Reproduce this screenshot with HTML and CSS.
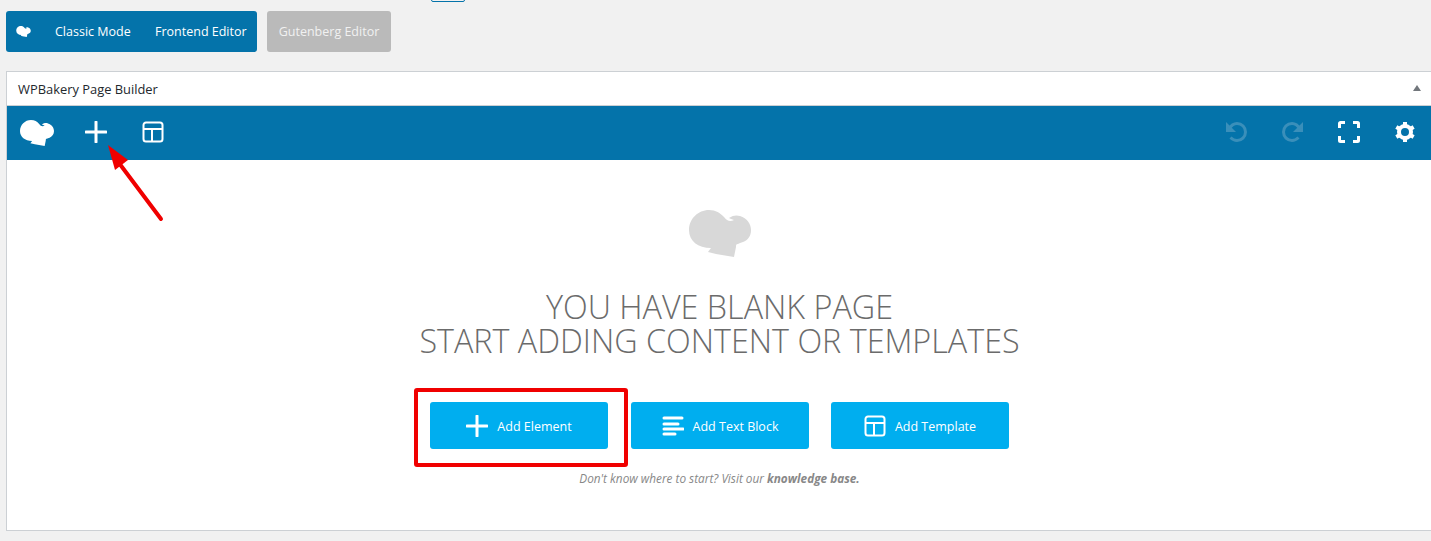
FILE: index.html
```html
<!DOCTYPE html>
<html lang="en">
<head>
  <meta charset="UTF-8">
  <title>WPBakery Page Builder</title>
  <link rel="stylesheet" href="styles.css">
</head>
<body>
  <svg class="defs" width="0" height="0">
    <symbol id="hat" viewBox="0 0 62 47">
      <path d="M20 0C27 0 31 3 35 7C38 11 41 12 45 10C43 9 41 9 40 8C44 5 48 5 51 6C58 8 62 14 62 20C62 26 59 30 54 32C52 33 50 33 49 34C47 34 47 35 47 37L45 47L27 44L19 42L22 38C9 38 0 31 0 20C0 9 9 0 20 0Z"/>
    </symbol>
    <symbol id="layout" viewBox="0 0 22 22">
      <path d="M4 1.500H18A2.500 2.500 0 0 1 20.500 4V18A2.500 2.500 0 0 1 18 20.500H4A2.500 2.500 0 0 1 1.500 18V4A2.500 2.500 0 0 1 4 1.500ZM1.500 8H20.500M10 8V20.500" fill="none" stroke="currentColor" stroke-width="2"/>
    </symbol>
    <symbol id="plus" viewBox="0 0 22 22">
      <path d="M11 1V21M1 11H21" fill="none" stroke="currentColor" stroke-width="3" stroke-linecap="round"/>
    </symbol>
  </svg>

  <div class="top-tab"></div>

  <div class="mode-row">
    <div class="mode-group">
      <svg class="mode-logo"><use href="#hat"/></svg>
      <span class="mode-link classic">Classic Mode</span>
      <span class="mode-link">Frontend Editor</span>
    </div>
    <div class="mode-gutenberg">Gutenberg Editor</div>
  </div>

  <div class="panel">
    <div class="panel-head">
      <span>WPBakery Page Builder</span>
      <span class="collapse"></span>
    </div>

    <div class="toolbar">
      <svg class="tool-logo"><use href="#hat"/></svg>
      <svg class="tool-plus"><use href="#plus"/></svg>
      <svg class="tool-layout"><use href="#layout"/></svg>
      <div class="toolbar-right">
        <svg class="tool-icon dim undo" viewBox="0 0 22 22"><path d="M1 1V11H11Z" fill="currentColor"/><path d="M4 8C6 4.500 8.500 2.500 12 2.500C17 2.500 20.500 6.500 20.500 11C20.500 16 16.500 19.500 12 19.500C9.500 19.500 7.500 18.500 5.500 16.500" fill="none" stroke="currentColor" stroke-width="3"/></svg>
        <svg class="tool-icon dim" viewBox="0 0 22 22"><path d="M21 1V11H11Z" fill="currentColor"/><path d="M18 8C16 4.500 13.500 2.500 10 2.500C5 2.500 1.500 6.500 1.500 11C1.500 16 5.500 19.500 10 19.500C12.500 19.500 14.500 18.500 16.500 16.500" fill="none" stroke="currentColor" stroke-width="3"/></svg>
        <svg class="tool-icon" viewBox="0 0 22 22"><path d="M1.500 7V2.500A1 1 0 0 1 2.500 1.500H7M15 1.500H19.500A1 1 0 0 1 20.500 2.500V7M20.500 15V19.500A1 1 0 0 1 19.500 20.500H15M7 20.500H2.500A1 1 0 0 1 1.500 19.500V15" fill="none" stroke="currentColor" stroke-width="3"/></svg>
        <svg class="tool-icon" viewBox="0 0 22 22"><circle cx="11" cy="11" r="6" fill="none" stroke="currentColor" stroke-width="4"/><path d="M11 1V21M2.300 6L19.700 16M2.300 16L19.700 6" fill="none" stroke="currentColor" stroke-width="4" stroke-dasharray="4 12"/></svg>
      </div>
    </div>

    <div class="blank">
      <svg class="blank-hat"><use href="#hat"/></svg>
      <h2 class="blank-title">YOU HAVE BLANK PAGE<br>START ADDING CONTENT OR TEMPLATES</h2>
      <div class="blank-actions">
        <a class="add-btn"><svg class="btn-icon"><use href="#plus"/></svg>Add Element</a>
        <a class="add-btn text-btn">
          <svg class="btn-icon" viewBox="0 0 22 22"><path d="M2 3H20M2 9H16M2 14H21M2 19H13" fill="none" stroke="currentColor" stroke-width="3" stroke-linecap="round"/></svg>
          Add Text Block
        </a>
        <a class="add-btn"><svg class="btn-icon"><use href="#layout"/></svg>Add Template</a>
      </div>
      <p class="blank-help">Don't know where to start? Visit our <strong>knowledge base.</strong></p>
    </div>
  </div>

  <!-- annotations on top of the screenshot -->
  <div class="note-box"></div>
  <svg class="note-arrow" width="70" height="90" viewBox="0 0 70 90">
    <path d="M60 76L18 20" stroke="#f00000" stroke-width="4" stroke-linecap="round"/>
    <path d="M7 2L27 17L14 27Z" fill="#f00000"/>
  </svg>
</body>
</html>
```

FILE: styles.css
```css
* {
  box-sizing: border-box;
}

html, body {
  height: 541px;
  overflow: hidden;
}

body {
  position: relative;
  margin: 0;
  padding: 11px 0 0 6px;
  background: #f1f1f1;
  color: #23282d;
  font-family: "Open Sans", sans-serif;
  font-size: 13px;
}

.defs {
  position: absolute;
}

.top-tab {
  position: absolute;
  top: -4px;
  left: 431px;
  width: 34px;
  height: 6px;
  border: 1px solid #0473aa;
  border-radius: 2px;
}

.mode-row {
  display: flex;
  gap: 10px;
  height: 41px;
}

.mode-group {
  display: flex;
  align-items: center;
  width: 251px;
  padding-left: 10px;
  background: #0473aa;
  border-radius: 3px;
  color: #fff;
}

.mode-logo {
  width: 15px;
  height: 11px;
  margin-top: -1px;
  fill: #fff;
}

.mode-link {
  font-size: 12.5px;
}

.classic {
  width: 100px;
  margin-left: 24px;
}

.mode-gutenberg {
  display: flex;
  align-items: center;
  justify-content: center;
  width: 124px;
  background: #bababa;
  border-radius: 3px;
  color: #f1f1f1;
  font-size: 12.5px;
}

.panel {
  margin-top: 19px;
  height: 460px;
  background: #fff;
  border: 1px solid #ccd0d4;
  border-right: 0;
}

.panel-head {
  display: flex;
  align-items: center;
  justify-content: space-between;
  height: 34px;
  padding: 0 10px 0 11px;
  border-bottom: 1px solid #ccd0d4;
  font-size: 12.9px;
}

.collapse {
  width: 0;
  height: 0;
  border: 4px solid transparent;
  border-top: 0;
  border-bottom: 6px solid #72777c;
  margin-top: -2px;
}

.toolbar {
  display: flex;
  align-items: center;
  height: 54px;
  padding-left: 13px;
  background: #0473aa;
  color: #fff;
  fill: #fff;
}

.tool-logo {
  width: 34px;
  height: 26px;
}

.tool-plus {
  width: 22px;
  height: 22px;
  margin-left: 31px;
  margin-top: -2px;
}

.tool-layout {
  width: 22px;
  height: 22px;
  margin-left: 35px;
  margin-top: -2px;
}

.toolbar-right {
  display: flex;
  gap: 34px;
  margin-left: auto;
  margin-top: -2px;
  padding-right: 15px;
}

.tool-icon {
  width: 22px;
  height: 22px;
}

.undo {
  margin-right: 1px;
}

.dim {
  color: #3a8fba;
}

.blank {
  display: flex;
  flex-direction: column;
  align-items: center;
  padding-top: 50px;
  padding-left: 1px;
}

.blank-hat {
  width: 62px;
  height: 47px;
  fill: #d8d8d8;
}

.blank-title {
  margin: 32px 0 0;
  color: #6b6b6b;
  font-size: 32.3px;
  font-weight: 300;
  line-height: 34px;
  text-align: center;
}

.blank-actions {
  display: flex;
  gap: 22px;
  margin-top: 45px;
}

.add-btn {
  display: flex;
  align-items: center;
  justify-content: center;
  gap: 9px;
  width: 178px;
  height: 47px;
  padding-top: 1px;
  background: #00aeef;
  border-radius: 3px;
  color: #fff;
  fill: #fff;
  font-size: 12.5px;
}

.text-btn {
  margin-left: 1px;
}

.btn-icon {
  width: 22px;
  height: 22px;
  margin-top: -1px;
}

.blank-help {
  margin: 21px 0 0;
  color: #888;
  font-size: 11.8px;
  font-style: italic;
}

.note-box {
  position: absolute;
  top: 388px;
  left: 414px;
  width: 214px;
  height: 79px;
  border: 4px solid #f00000;
  border-radius: 3px;
}

.note-arrow {
  position: absolute;
  top: 143px;
  left: 101px;
}
```
